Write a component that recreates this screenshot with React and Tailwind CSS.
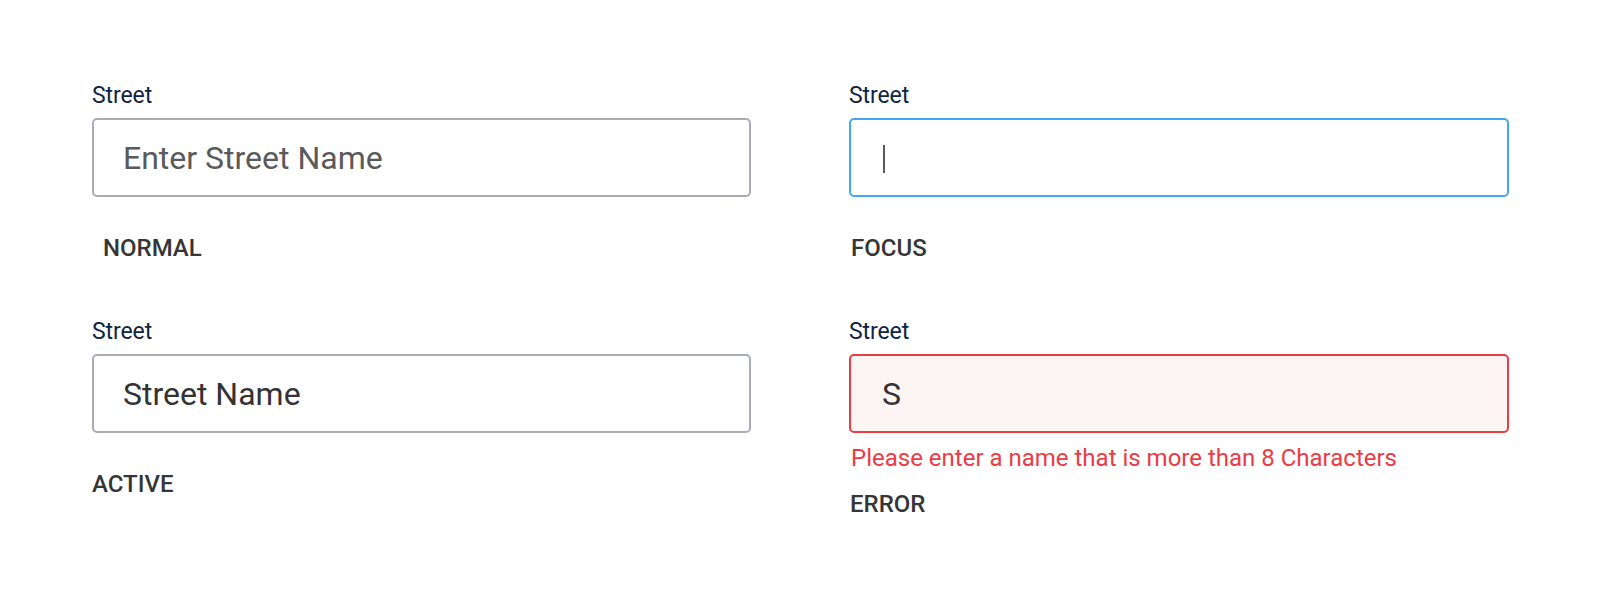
import React from 'react';

const fieldBase =
  'h-[79px] rounded-[5px] border-2 px-[29px] flex items-center text-[32px] leading-none';

function Field({ state, placeholder, value, status, statusClass = '', message }) {
  let box = 'border-[#a9abb9] bg-white';
  if (state === 'focus') box = 'border-[#42a7f2] bg-white';
  if (state === 'error') box = 'border-[#ec3b45] bg-[#fdf4f4]';

  return (
    <div className="flex flex-col">
      <label className="text-[23px] leading-[26px] text-[#0f2442] tracking-[-0.1px]">Street</label>
      <div className={`${fieldBase} ${box} mt-[9px]`}>
        {state === 'focus' ? (
          <span className="block w-[2px] h-[28px] bg-[#5a5a5a] mt-[3px] ml-[3px]" />
        ) : value ? (
          <span className={`text-[#333333] ${state === 'error' ? 'ml-[2px]' : ''}`}>{value}</span>
        ) : (
          <span className="text-[#5a5a5a]">{placeholder}</span>
        )}
      </div>
      {message && (
        <p className="mt-[11px] ml-[2px] text-[24px] leading-[28px] text-[#ec3b45]">{message}</p>
      )}
      <p
        className={`${message ? 'mt-[18px]' : 'mt-[37px]'} text-[24px] leading-[28px] font-medium text-[#363636] ${statusClass}`}
      >
        {status}
      </p>
    </div>
  );
}

export default function App() {
  return (
    <div
      className="w-[1600px] h-[600px] bg-white pl-[92px] pt-[83px]"
      style={{ fontFamily: 'Roboto, "Noto Sans", sans-serif' }}
    >
      <div className="grid grid-cols-[659px_660px] gap-x-[98px] gap-y-[57px] items-start">
        <Field state="normal" placeholder="Enter Street Name" status="NORMAL" statusClass="ml-[11px]" />
        <Field state="focus" status="FOCUS" statusClass="ml-[2px]" />
        <Field state="active" value="Street Name" status="ACTIVE" />
        <Field
          state="error"
          value="S"
          status="ERROR"
          statusClass="ml-[1px]"
          message="Please enter a name that is more than 8 Characters"
        />
      </div>
    </div>
  );
}
